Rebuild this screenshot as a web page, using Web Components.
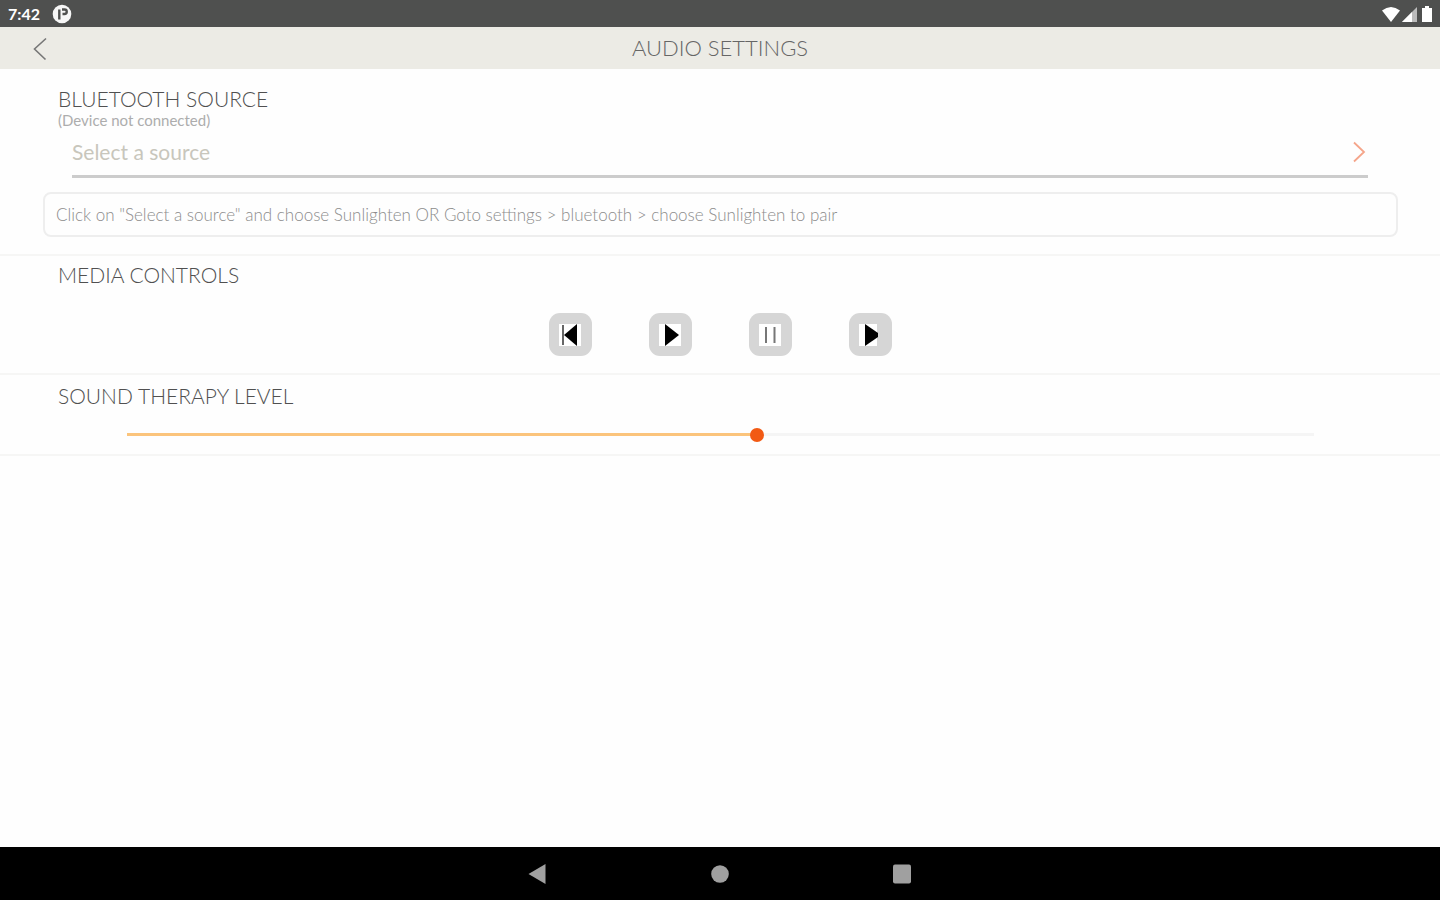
<!DOCTYPE html>
<html lang="en">
<head>
<meta charset="utf-8">
<title>Audio Settings</title>
<style>
html, body { height: 100%; }
body { margin: 0; background: #fefefe; font-family: Lato, "Open Sans", sans-serif; }
</style>
</head>
<body>
<audio-settings-app></audio-settings-app>
<script>
function define(name, markup, setup) {
  const template = document.createElement('template');
  template.innerHTML = markup;
  customElements.define(name, class extends HTMLElement {
    constructor() {
      super();
      this.attachShadow({ mode: 'open' }).append(template.content.cloneNode(true));
    }
    connectedCallback() { if (setup) setup(this, this.shadowRoot); }
  });
}

define('status-bar', `
<style>
:host { display: flex; align-items: center; justify-content: space-between; box-sizing: border-box; height: 27px; padding: 0 6px 0 8px; background: #4f504f; color: #fff; }
.side { display: flex; align-items: center; gap: 12px; }
.time { font: 700 16px/27px Lato, sans-serif; }
.icons { gap: 2px; }
svg { display: block; }
</style>
<div class="side"><span class="time">7:42</span>
<svg width="20" height="20" viewBox="0 0 20 20" aria-hidden="true"><circle cx="10" cy="10" r="9.3" fill="#f7f7f7"/><path d="M7.300 15.500V5.500M10 5.500h2.500a1.800 1.800 0 0 1 0 4.500H10.500" fill="none" stroke="#4f504f" stroke-width="2.4"/></svg></div>
<div class="side icons">
<svg width="18" height="18" viewBox="0 0 18 18" aria-hidden="true"><path d="M0 5.5Q9-1.5 18 5.5L9 17Z" fill="#fff"/></svg>
<svg width="16" height="18" viewBox="0 0 16 18" aria-hidden="true"><path d="M0 17L15 2V17Z" fill="#bbb"/><path d="M0 17L10 7V17Z" fill="#fff"/></svg>
<svg width="14" height="18" viewBox="0 0 14 18" aria-hidden="true"><path d="M5 1h4v2h3v14h-10V3H5Z" fill="#fff"/></svg>
</div>`);

define('title-bar', `
<style>
:host { display: grid; grid-template-columns: 56px 1fr 56px; align-items: center; height: 42px; background: #ecebe5; }
h1 { margin: 0; text-align: center; font-size: 22px; line-height: 42px; font-weight: 300; color: #666; }
button { display: flex; justify-content: flex-end; padding: 2px 8px 0; border: 0; background: none; }
</style>
<button aria-label="Back"><svg width="16" height="24" viewBox="0 0 16 24" fill="none" stroke="#777" stroke-width="1.600"><path d="M14 1.500L2.500 12L13.500 22.500"/></svg></button>
<h1><slot></slot></h1>`);

define('settings-section', `
<style>
:host { display: block; border-bottom: 2px solid #f6f6f5; }
h2 { margin: 0; padding: 0 58px; font-size: 21px; line-height: 24px; font-weight: 300; color: #505050; }
</style>
<h2><slot name="heading"></slot></h2>
<slot></slot>`);

define('source-picker', `
<style>
:host { display: block; padding: 0 42px 0 43px; }
p { margin: 0; color: #adadad; }
.state { padding: 0 15px; font-size: 15px; line-height: 18px; }
button { display: flex; align-items: center; justify-content: space-between; width: calc(100% - 59px); height: 49px; margin: 0 30px 14px 29px; padding: 0 2px 0 0; box-sizing: border-box; border: 0; border-bottom: 3px solid #ccc; background: none; font: 400 21px/24px Lato, sans-serif; color: #c8c6bc; }
.hint { box-sizing: border-box; min-height: 45px; padding: 0 11px; border: 2px solid #eee; border-radius: 8px; font-size: 17px; line-height: 41px; font-weight: 300; color: #8c8c8c; }
</style>
<p class="state"><slot name="state"></slot></p>
<button><slot name="placeholder"></slot><svg width="14" height="22" viewBox="0 0 14 22" fill="none" stroke="#f5a58a" stroke-width="1.800" aria-hidden="true"><path d="M2 1.500L12 11L2 20.500"/></svg></button>
<p class="hint"><slot name="hint"></slot></p>`);

const glyphs = {
  previous: '<path d="M4 1V21" stroke="#333" stroke-width="1.500"/><path d="M18 0V22L5 11Z"/>',
  play: '<path d="M6 0L20 11L6 22Z"/>',
  pause: '<path d="M7 3V19M15.500 3V19" stroke="#777" stroke-width="2"/>',
  next: '<path d="M18 0H22V22H18Z" fill="#d6d6d6"/><path d="M6 0L19 9V13L6 22Z"/>'
};
define('media-button', `
<style>
:host { display: block; }
button { display: flex; align-items: center; justify-content: center; width: 43px; height: 43px; padding: 0; border: 0; border-radius: 11px; background: #d6d6d6; }
</style>
<button><svg width="22" height="22" viewBox="0 0 22 22" aria-hidden="true"></svg></button>`,
(host, root) => {
  const kind = host.getAttribute('kind');
  root.querySelector('button').setAttribute('aria-label', kind);
  root.querySelector('svg').innerHTML = '<rect width="22" height="22" fill="#fff"/>' + glyphs[kind];
});

define('media-controls', `
<style>:host { display: flex; justify-content: center; gap: 57px; padding: 26px 0 17px; }</style>
<slot></slot>`);

define('level-slider', `
<style>
:host { display: block; padding: 18px 126px 11px 127px; --level: 53%; }
input { -webkit-appearance: none; appearance: none; display: block; width: 100%; height: 17px; margin: 0; background: linear-gradient(to right, #fbc47c var(--level), #f5f5f5 var(--level)) center / 100% 3px no-repeat; }
input::-webkit-slider-thumb { -webkit-appearance: none; width: 14px; height: 14px; border: 0; border-radius: 50%; background: #f25a14; }
</style>
<input type="range" min="0" max="1000" value="531" aria-label="Sound therapy level">`,
(host, root) => {
  const input = root.querySelector('input');
  input.addEventListener('input', () => host.style.setProperty('--level', input.value / 10 + '%'));
});

define('navigation-bar', `
<style>
:host { display: flex; justify-content: center; align-items: center; gap: 134px; height: 53px; background: #000; }
button { display: flex; align-items: center; justify-content: center; width: 48px; height: 48px; padding: 0; border: 0; background: none; }
</style>
<button aria-label="Back"><svg width="20" height="20" viewBox="0 0 20 20" fill="#a0a0a0"><path d="M0.500 10L17.500 0V20Z"/></svg></button>
<button aria-label="Home"><svg width="20" height="20" viewBox="0 0 20 20" fill="#a0a0a0"><circle cx="10" cy="10" r="8.800"/></svg></button>
<button aria-label="Recent apps"><svg width="20" height="20" viewBox="0 0 20 20" fill="#a0a0a0"><rect x="1" y="0.500" width="18" height="19" rx="2"/></svg></button>`);

define('audio-settings-app', `
<style>
:host { display: flex; flex-direction: column; min-height: 100vh; }
main { flex: 1; }
.source { padding: 18px 0 17px; }
.media { padding-top: 7px; }
.level { padding-top: 9px; }
</style>
<status-bar></status-bar>
<title-bar>AUDIO SETTINGS</title-bar>
<main>
<settings-section class="source"><span slot="heading">BLUETOOTH SOURCE</span>
<source-picker><span slot="state">(Device not connected)</span><span slot="placeholder">Select a source</span><span slot="hint">Click on "Select a source" and choose Sunlighten OR Goto settings &gt; bluetooth &gt; choose Sunlighten to pair</span></source-picker>
</settings-section>
<settings-section class="media"><span slot="heading">MEDIA CONTROLS</span>
<media-controls><media-button kind="previous"></media-button><media-button kind="play"></media-button><media-button kind="pause"></media-button><media-button kind="next"></media-button></media-controls>
</settings-section>
<settings-section class="level"><span slot="heading">SOUND THERAPY LEVEL</span>
<level-slider></level-slider>
</settings-section>
</main>
<navigation-bar></navigation-bar>`);
</script>
</body>
</html>
